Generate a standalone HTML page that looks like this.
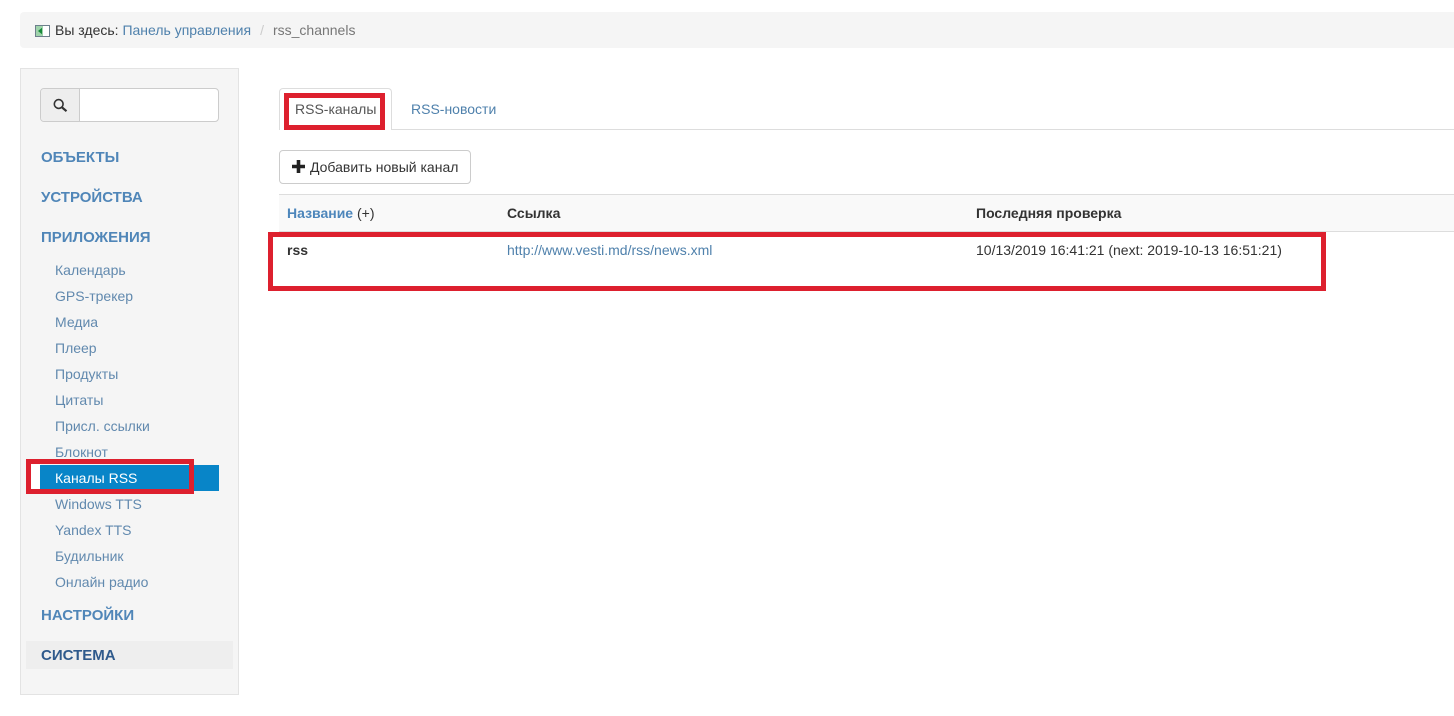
<!DOCTYPE html>
<html><head><meta charset="utf-8">
<style>
html,body{margin:0;padding:0;background:#fff;width:1454px;height:716px;overflow:hidden}
body{font-family:"Liberation Sans",sans-serif;font-size:14px;color:#333;position:relative}
.a{position:absolute;white-space:nowrap}
.l{color:#4f81ac}
.h{font-weight:bold;font-size:15px;color:#5086b8;left:41px;line-height:20px}
.s{left:55px;color:#6189ae;line-height:20px}
.r{position:absolute;border:solid #dd202e;box-sizing:border-box}
</style></head><body>
<div class="a" style="left:20px;top:12px;width:1434px;height:36px;background:#f5f5f5;border-radius:4px 0 0 4px"></div>
<svg class="a" style="left:35px;top:24px" width="15" height="14" viewBox="0 0 15 14"><rect x=".5" y="1.500" width="14" height="11" fill="#fff" stroke="#6d7f8c"/><rect x="1" y="2" width="7" height="10" fill="#9fd3ab"/><path d="M7 3.800 3 7l4 3.200z" fill="#178a3a"/></svg>
<div class="a" style="left:55px;top:20px;line-height:20px">Вы здесь: <span class="l">Панель управления</span><span style="color:#ccc;padding:0 9px">/</span><span style="color:#777">rss_channels</span></div>

<div class="a" style="left:20px;top:68px;width:219px;height:627px;background:#f5f5f5;border:1px solid #e3e3e3;box-sizing:border-box"></div>
<div class="a" style="left:40px;top:88px;width:179px;height:34px;box-sizing:border-box;border:1px solid #ccc;border-radius:4px;background:#fff"></div>
<div class="a" style="left:41px;top:89px;width:39px;height:32px;background:#eee;border-right:1px solid #ccc;border-radius:3px 0 0 3px;box-sizing:border-box"></div>
<svg class="a" style="left:52px;top:98px" width="16" height="15" viewBox="0 0 16 15"><circle cx="6.700" cy="6" r="4.400" fill="none" stroke="#333" stroke-width="1.600"/><path d="M10 9.400 14.500 13.200" stroke="#333" stroke-width="2.200"/></svg>

<div class="a h" style="top:148px">ОБЪЕКТЫ</div>
<div class="a h" style="top:188px">УСТРОЙСТВА</div>
<div class="a h" style="top:228px">ПРИЛОЖЕНИЯ</div>
<div class="a s" style="top:260px">Календарь</div>
<div class="a s" style="top:286px">GPS-трекер</div>
<div class="a s" style="top:312px">Медиа</div>
<div class="a s" style="top:338px">Плеер</div>
<div class="a s" style="top:364px">Продукты</div>
<div class="a s" style="top:390px">Цитаты</div>
<div class="a s" style="top:416px">Присл. ссылки</div>
<div class="a s" style="top:442px">Блокнот</div>
<div class="a" style="left:31px;top:464px;width:10px;height:26px;background:#fff"></div>
<div class="a" style="left:40px;top:465px;width:179px;height:26px;background:#0885c8"></div>
<div class="a s" style="top:468px;color:#fff">Каналы RSS</div>
<div class="a s" style="top:494px">Windows TTS</div>
<div class="a s" style="top:520px">Yandex TTS</div>
<div class="a s" style="top:546px">Будильник</div>
<div class="a s" style="top:572px">Онлайн радио</div>
<div class="a h" style="top:606px">НАСТРОЙКИ</div>
<div class="a" style="left:26px;top:641px;width:207px;height:28px;background:#eee"></div>
<div class="a h" style="top:646px;color:#2f5a8c">СИСТЕМА</div>
<div class="r" style="left:26px;top:459px;width:168px;height:35px;border-width:5px"></div>

<div class="a" style="left:279px;top:129px;width:1175px;height:1px;background:#ddd"></div>
<div class="a" style="left:279px;top:88px;width:113px;height:42px;box-sizing:border-box;background:#fff;border:1px solid #ddd;border-bottom:0;border-radius:4px 4px 0 0"></div>
<div class="a" style="left:295px;top:99px;line-height:20px;color:#555">RSS-каналы</div>
<div class="a l" style="left:411px;top:99px;line-height:20px">RSS-новости</div>
<div class="r" style="left:284px;top:93px;width:101px;height:37px;border-width:5px"></div>

<div class="a" style="left:279px;top:150px;width:192px;height:34px;box-sizing:border-box;border:1px solid #ccc;border-radius:4px;background:#fff"></div>
<svg class="a" style="left:292px;top:160px" width="13" height="13" viewBox="0 0 13 13"><path d="M6.500 0v13M0 6.500h13" stroke="#222" stroke-width="3.600"/></svg>
<div class="a" style="left:310px;top:157px;line-height:20px">Добавить новый канал</div>

<div class="a" style="left:279px;top:194px;width:1175px;height:38px;box-sizing:border-box;background:#f9f9f9;border-top:1px solid #ddd;border-bottom:1px solid #ddd"></div>
<div class="a" style="left:287px;top:203px;line-height:20px"><b style="color:#4d86bb">Название</b> (+)</div>
<div class="a" style="left:507px;top:203px;line-height:20px"><b>Ссылка</b></div>
<div class="a" style="left:976px;top:203px;line-height:20px"><b>Последняя проверка</b></div>
<div class="a" style="left:287px;top:240px;line-height:20px"><b>rss</b></div>
<div class="a l" style="left:507px;top:240px;line-height:20px">http://www.vesti.md/rss/news.xml</div>
<div class="a" style="left:976px;top:240px;line-height:20px">10/13/2019 16:41:21 (next: 2019-10-13 16:51:21)</div>
<div class="r" style="left:268px;top:232px;width:1058px;height:59px;border-width:5px"></div>
</body></html>
